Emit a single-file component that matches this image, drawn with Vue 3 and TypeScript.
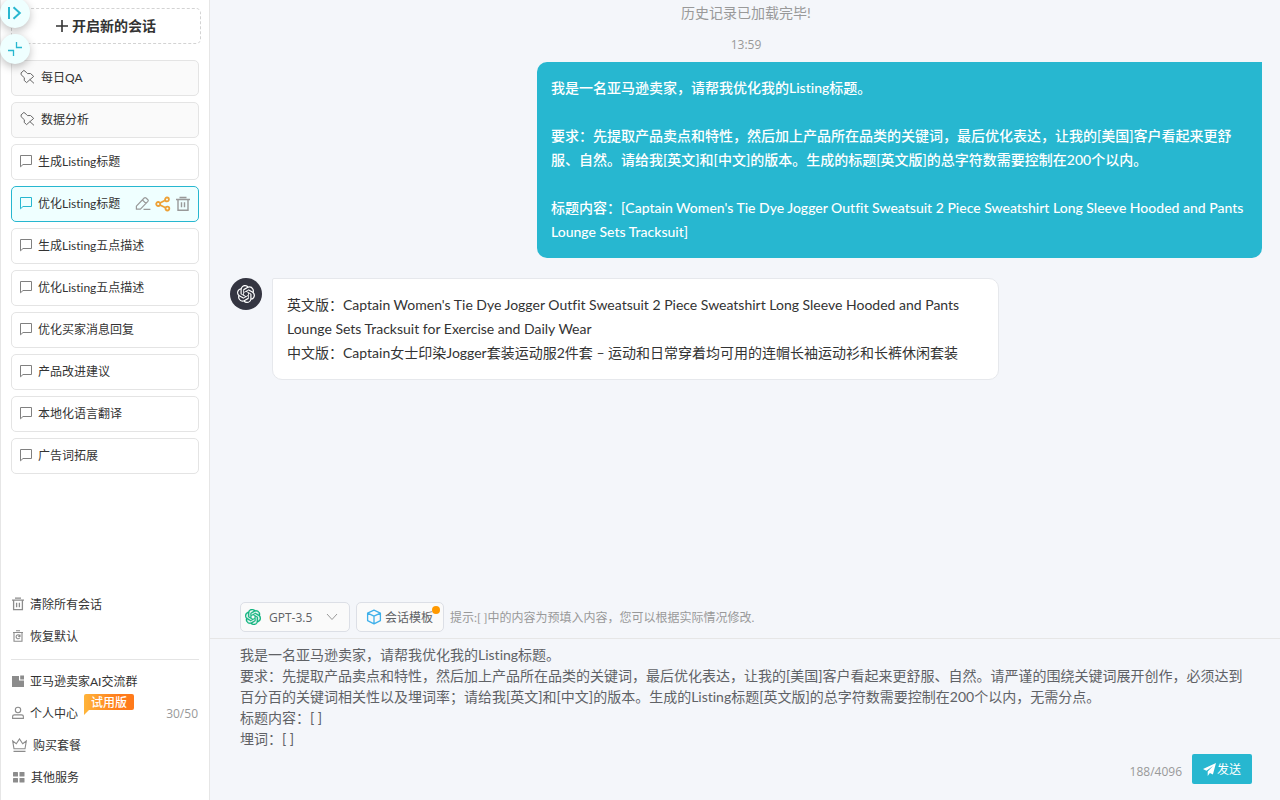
<script setup lang="ts">
import { computed, ref } from 'vue'

interface Session {
  id: number
  title: string
  pinned?: boolean
}

const sessions: Session[] = [
  { id: 1, title: '每日QA', pinned: true },
  { id: 2, title: '数据分析', pinned: true },
  { id: 3, title: '生成Listing标题' },
  { id: 4, title: '优化Listing标题' },
  { id: 5, title: '生成Listing五点描述' },
  { id: 6, title: '优化Listing五点描述' },
  { id: 7, title: '优化买家消息回复' },
  { id: 8, title: '产品改进建议' },
  { id: 9, title: '本地化语言翻译' },
  { id: 10, title: '广告词拓展' },
]
const activeId = ref(4)
const model = ref('GPT-3.5')

const question = `我是一名亚马逊卖家，请帮我优化我的Listing标题。

要求：先提取产品卖点和特性，然后加上产品所在品类的关键词，最后优化表达，让我的[美国]客户看起来更舒服、自然。请给我[英文]和[中文]的版本。生成的标题[英文版]的总字符数需要控制在200个以内。

标题内容：[Captain Women's Tie Dye Jogger Outfit Sweatsuit 2 Piece Sweatshirt Long Sleeve Hooded and Pants Lounge Sets Tracksuit]`

const answer = `英文版：Captain Women's Tie Dye Jogger Outfit Sweatsuit 2 Piece Sweatshirt Long Sleeve Hooded and Pants Lounge Sets Tracksuit for Exercise and Daily Wear
中文版：Captain女士印染Jogger套装运动服2件套 – 运动和日常穿着均可用的连帽长袖运动衫和长裤休闲套装`

const initialDraft = `我是一名亚马逊卖家，请帮我优化我的Listing标题。
要求：先提取产品卖点和特性，然后加上产品所在品类的关键词，最后优化表达，让我的[美国]客户看起来更舒服、自然。请严谨的围绕关键词展开创作，必须达到百分百的关键词相关性以及埋词率；请给我[英文]和[中文]的版本。生成的Listing标题[英文版]的总字符数需要控制在200个以内，无需分点。
标题内容：[ ]
埋词：[ ]`
const draft = ref(initialDraft)
const baseCount = 188
const count = computed(() => baseCount + draft.value.length - initialDraft.length)

const knot =
  'M22.2819 9.8211a5.9847 5.9847 0 0 0-.5157-4.9108 6.0462 6.0462 0 0 0-6.5098-2.9A6.0651 6.0651 0 0 0 4.9807 4.1818a5.9847 5.9847 0 0 0-3.9977 2.9 6.0462 6.0462 0 0 0 .7427 7.0966 5.98 5.98 0 0 0 .511 4.9107 6.051 6.051 0 0 0 6.5146 2.9001A5.9847 5.9847 0 0 0 13.2599 24a6.0557 6.0557 0 0 0 5.7718-4.2058 5.9894 5.9894 0 0 0 3.9977-2.9001 6.0557 6.0557 0 0 0-.7475-7.0729zm-9.022 12.6081a4.4755 4.4755 0 0 1-2.8764-1.0408l.1419-.0804 4.7783-2.7582a.7948.7948 0 0 0 .3927-.6813v-6.7369l2.02 1.1686a.071.071 0 0 1 .038.052v5.5826a4.504 4.504 0 0 1-4.4945 4.4944zm-9.6607-4.1254a4.4708 4.4708 0 0 1-.5346-3.0137l.142.0852 4.783 2.7582a.7712.7712 0 0 0 .7806 0l5.8428-3.3685v2.3324a.0804.0804 0 0 1-.0332.0615L9.74 19.9502a4.4992 4.4992 0 0 1-6.1408-1.6464zM2.3408 7.8956a4.485 4.485 0 0 1 2.3655-1.9728V11.6a.7664.7664 0 0 0 .3879.6765l5.8144 3.3543-2.0201 1.1685a.0757.0757 0 0 1-.071 0l-4.8303-2.7865A4.504 4.504 0 0 1 2.3408 7.872zm16.5963 3.8558L13.1038 8.364 15.1192 7.2a.0757.0757 0 0 1 .071 0l4.8303 2.7913a4.4944 4.4944 0 0 1-.6765 8.1042v-5.6772a.79.79 0 0 0-.407-.667zm2.0107-3.0231l-.142-.0852-4.7735-2.7818a.7759.7759 0 0 0-.7854 0L9.409 9.2297V6.8974a.0662.0662 0 0 1 .0284-.0615l4.8303-2.7866a4.4992 4.4992 0 0 1 6.6802 4.66zM8.3065 12.863l-2.02-1.1638a.0804.0804 0 0 1-.038-.0567V6.0742a4.4992 4.4992 0 0 1 7.3757-3.4537l-.142.0805L8.704 5.459a.7948.7948 0 0 0-.3927.6813zm1.0976-2.3654l2.602-1.4998 2.6069 1.4998v2.9994l-2.5974 1.4997-2.6067-1.4997Z'
</script>

<template>
  <div class="app">
    <div class="floats">
      <button class="float" type="button" aria-label="展开">
        <svg width="16" height="16" viewBox="0 0 16 16" fill="none" stroke="currentColor" stroke-width="2">
          <path d="M2 2v12" />
          <path d="M6.5 2.2L12.8 8l-6.3 5.8" />
        </svg>
      </button>
      <button class="float" type="button" aria-label="收起">
        <svg width="16" height="16" viewBox="0 0 16 16" fill="none" stroke="currentColor" stroke-width="1.3">
          <path d="M9.5 1v5.5H15M1 9.5h5.5V15" />
        </svg>
      </button>
    </div>

    <aside class="sidebar">
      <button class="new-chat" type="button">
        <svg width="12" height="12" viewBox="0 0 12 12" fill="none" stroke="currentColor" stroke-width="1.6">
          <path d="M6 0v12M0 6h12" />
        </svg>
        <span>开启新的会话</span>
      </button>

      <ul class="sessions">
        <li
          v-for="s in sessions"
          :key="s.id"
          class="session"
          :class="{ pinned: s.pinned, active: s.id === activeId }"
        >
          <button class="session-main" type="button" @click="activeId = s.id">
            <svg v-if="s.pinned" width="16" height="16" viewBox="0 0 16 16" fill="none" stroke="currentColor" stroke-linejoin="round" stroke-linecap="round">
              <path d="M1.4 3.6L3.9 1.4 6.3 3.3l1.2 1.3 3-.1 3.2 2.9-3.8 3.3-3.3 2.9-2.4-2.2.2-2.6L1.4 6zM10 10.7l3.7 3.4" />
            </svg>
            <svg v-else class="bubble-icon" width="14" height="14" viewBox="0 0 14 14" fill="none" stroke="currentColor">
              <path d="M1.5 12.8V1.5h11v9H4z" />
            </svg>
            <span>{{ s.title }}</span>
          </button>
          <div v-if="s.id === activeId" class="actions">
            <button type="button" aria-label="编辑">
              <svg width="16" height="16" viewBox="0 0 16 16" fill="none" stroke="#999" stroke-width="1.2" stroke-linejoin="round">
                <path d="M1.4 10.2L9.2 2q.9-.8 1.8 0l1.9 1.7q.8.8 0 1.7L5.4 13.2H1.4zM7.4 4l3.6 3.4M8.5 13.4H15.4" />
              </svg>
            </button>
            <button type="button" aria-label="分享">
              <svg width="16" height="16" viewBox="0 0 16 16" fill="none" stroke="#eda136" stroke-width="1.8">
                <circle cx="3.2" cy="8" r="2" />
                <circle cx="12" cy="3.4" r="1.9" />
                <circle cx="12.4" cy="12.6" r="1.9" />
                <path d="M5 7l5.3-2.8M5 9l5.6 2.8" />
              </svg>
            </button>
            <button type="button" aria-label="删除">
              <svg width="16" height="16" viewBox="0 0 16 16" fill="none" stroke="#999" stroke-width="1.4">
                <path d="M1 3.5h14M4.5 1.5h7M3 3.5v10.8h10V3.5M6.5 6.2v5M9.5 6.2v5" />
              </svg>
            </button>
          </div>
        </li>
      </ul>

      <nav class="tools">
        <button type="button" class="tool">
          <svg width="12" height="14" viewBox="0 0 12 14" fill="none" stroke="currentColor" stroke-width="1.3">
            <path d="M0 3.2h12M3 1.2h6M1.6 3.2v9.4h8.8V3.2M4.6 5.8v4.4M7.4 5.8v4.4" />
          </svg>
          <span>清除所有会话</span>
        </button>
        <button type="button" class="tool">
          <svg width="12" height="14" viewBox="0 0 12 14" fill="none" stroke="currentColor" stroke-width="1.1">
            <path d="M1 3.5h10M4 1.7h4M2 3.5v8.8h8V3.5M7.6 6.4a2 2 0 1 0 .2 2.4M8 5.6v1.8H6.2" />
          </svg>
          <span>恢复默认</span>
        </button>
        <hr />
        <a href="#group" class="tool">
          <svg width="12" height="14" viewBox="0 0 12 14" fill="currentColor">
            <path d="M0 2h7v4.5h5V13H0zM8.2 1.6H12V5.4H8.2z" />
          </svg>
          <span>亚马逊卖家AI交流群</span>
        </a>
        <a href="#me" class="tool">
          <svg width="12" height="14" viewBox="0 0 12 14" fill="none" stroke="currentColor" stroke-width="1.1">
            <circle cx="6" cy="4" r="2.7" />
            <path d="M.6 12.4v-1.6q0-1.9 2-1.9h6.8q2 0 2 1.9v1.6z" />
          </svg>
          <span class="me">个人中心<em class="trial">试用版</em></span>
          <span class="quota">30/50</span>
        </a>
        <a href="#plans" class="tool">
          <svg width="15" height="14" viewBox="0 0 15 14" fill="none" stroke="currentColor" stroke-width="1.1">
            <path d="M2 10.8L.7 3l3.6 2.7L7.5.9l3.2 4.8L14.3 3 13 10.8zM1.5 13.4h12" />
          </svg>
          <span>购买套餐</span>
        </a>
        <a href="#services" class="tool">
          <svg width="13" height="12" viewBox="0 0 13 12" fill="currentColor">
            <rect x="1" y="1" width="5" height="4.5" rx=".6" />
            <rect x="7.5" y="1" width="5" height="4.5" rx=".6" />
            <rect x="1" y="7" width="5" height="4.5" rx=".6" />
            <rect x="7.5" y="7" width="5" height="4.5" rx=".6" />
          </svg>
          <span>其他服务</span>
        </a>
      </nav>
    </aside>

    <main class="main">
      <section class="chat">
        <p class="notice">历史记录已加载完毕!</p>
        <time class="time">13:59</time>
        <div class="message mine">
          <div class="bubble">{{ question }}</div>
        </div>
        <div class="message">
          <div class="avatar">
            <svg width="18" height="18" viewBox="0 0 24 24" fill="currentColor"><path :d="knot" /></svg>
          </div>
          <div class="bubble">{{ answer }}</div>
        </div>
      </section>

      <div class="toolbar">
        <label class="model">
          <svg class="model-logo" width="16" height="16" viewBox="0 0 24 24" fill="currentColor" stroke="currentColor" stroke-width=".6"><path :d="knot" /></svg>
          <select v-model="model" aria-label="模型">
            <option>GPT-3.5</option>
          </select>
          <svg class="arrow" width="12" height="12" viewBox="0 0 12 12" fill="none" stroke="currentColor">
            <path d="M1 3l5 5.5L11 3" />
          </svg>
        </label>
        <button type="button" class="template">
          <svg width="16" height="16" viewBox="0 0 16 16" fill="none" stroke="#3fb0ea" stroke-width="1.3" stroke-linejoin="round">
            <path d="M8 1.2l6.4 2.9v7.6L8 14.8l-6.4-3.1V4.1zM1.6 4.1L8 7.2l6.4-3.1M8 7.2v7.6" />
          </svg>
          <span>会话模板</span>
          <i class="dot"></i>
        </button>
        <span class="hint">提示:[ ]中的内容为预填入内容，您可以根据实际情况修改.</span>
      </div>

      <form class="composer" @submit.prevent>
        <textarea v-model="draft" aria-label="消息内容" spellcheck="false"></textarea>
        <div class="send-row">
          <span class="count">{{ count }}/4096</span>
          <button type="submit" class="send">
            <svg width="13" height="13" viewBox="0 0 13 13" fill="currentColor">
              <path d="M13 0L0 6l3.4 1.7L10 3 4.7 8.4V13l2.2-3 3 1.6z" />
            </svg>
            <span>发送</span>
          </button>
        </div>
      </form>
    </main>
  </div>
</template>

<style>
html,
body {
  margin: 0;
  height: 100%;
}
#app {
  height: 100%;
}
</style>

<style scoped>
* {
  box-sizing: border-box;
}
.app {
  position: relative;
  display: flex;
  height: 100vh;
  overflow: hidden;
  background: #f4f6fa;
  color: #333;
  font-family: Lato, 'Noto Sans CJK SC', sans-serif;
  font-size: 12px;
  line-height: 19px;
  font-variant-ligatures: none;
}
button,
select,
textarea {
  margin: 0;
  padding: 0;
  border: 0;
  background: none;
  color: inherit;
  font: inherit;
}
button {
  cursor: pointer;
}
svg {
  display: block;
  flex: none;
}
.time,
.quota,
.count,
.model select {
  font-family: 'Open Sans', 'Noto Sans CJK SC', sans-serif;
}
.floats {
  position: absolute;
  left: 0;
  top: -2px;
  z-index: 2;
  display: grid;
  gap: 6px;
}
.float {
  display: grid;
  place-items: center;
  width: 30px;
  height: 30px;
  border-radius: 50%;
  background: #efffff;
  color: #27b7d0;
  box-shadow: 0 3px 8px rgba(0, 0, 0, 0.25);
}
.sidebar {
  display: flex;
  flex-direction: column;
  flex: none;
  width: 210px;
  padding: 8px 10px 7px;
  border: solid #e6e6e6;
  border-width: 0 1px;
  background: #fff;
}
.new-chat {
  display: flex;
  align-items: center;
  justify-content: center;
  gap: 4px;
  height: 36px;
  margin-right: -2px;
  border: 1px dashed #d3d3d3;
  border-radius: 5px;
  font-size: 14px;
  font-weight: 700;
  line-height: 18px;
}
.sessions {
  display: grid;
  gap: 6px;
  margin: 16px 0 0;
  padding: 0;
  list-style: none;
}
.session {
  display: flex;
  align-items: center;
  height: 36px;
  padding: 0 7px;
  border: 1px solid #e4e4e4;
  border-radius: 5px;
}
.session.pinned {
  padding: 0 8px;
  background: #fafafa;
}
.session.active {
  border-color: #27b7d0;
  background: #efffff;
}
.session-main {
  display: flex;
  align-items: center;
  flex: 1;
  gap: 5px;
  height: 100%;
  padding-bottom: 2px;
  text-align: left;
  white-space: nowrap;
}
.session-main svg {
  color: #666;
}
.session-main .bubble-icon {
  color: #808080;
}
.active .session-main .bubble-icon {
  color: #27b7d0;
}
.actions {
  display: flex;
  gap: 4px;
}
.tools {
  display: grid;
  margin-top: auto;
}
.tool {
  display: flex;
  align-items: center;
  gap: 6px;
  height: 32px;
  padding: 0 1px;
  color: inherit;
  text-decoration: none;
}
.tool svg {
  color: #8c8c8c;
}
.tools hr {
  width: 100%;
  height: 1px;
  margin: 7px 0 5px;
  border: 0;
  background: #e4e4e4;
}
.me {
  position: relative;
}
.trial {
  position: absolute;
  left: 54px;
  top: -10px;
  width: 50px;
  height: 16px;
  border-radius: 2px 2px 2px 0;
  background: linear-gradient(90deg, #ffb43a, #ff7a1a 70%);
  color: #fff;
  font-style: normal;
  font-weight: 500;
  line-height: 17px;
  text-align: center;
}
.trial::after {
  content: '';
  position: absolute;
  left: 0;
  top: 100%;
  border: solid transparent;
  border-width: 0 5px 5px 0;
  border-left: 0;
  border-top: 5px solid #ffb43a;
}
.quota {
  margin-left: auto;
  color: #999;
}
.main {
  display: flex;
  flex: 1;
  flex-direction: column;
  min-width: 0;
}
.chat {
  display: flex;
  flex: 1;
  flex-direction: column;
  min-height: 0;
  padding: 0 18px 0 20px;
  overflow: hidden;
}
.notice {
  margin: 0;
  color: #999;
  font-size: 14px;
  line-height: 26px;
  text-align: center;
}
.time {
  margin: 9px 0 7px;
  color: #999;
  line-height: 20px;
  text-align: center;
}
.message {
  display: flex;
  gap: 10px;
  margin-bottom: 20px;
}
.mine {
  justify-content: flex-end;
}
.bubble {
  box-sizing: content-box;
  max-width: 697px;
  padding: 14px;
  border: 1px solid #e6e8ec;
  border-radius: 2px 10px 10px 10px;
  background: #fff;
  font-size: 14px;
  line-height: 24px;
  white-space: pre-wrap;
}
.mine .bubble {
  border: 0;
  border-radius: 10px 0 10px 10px;
  background: #27b7d0;
  color: #fff;
  font-weight: 500;
}
.avatar {
  display: grid;
  flex: none;
  place-items: center;
  width: 32px;
  height: 32px;
  border-radius: 50%;
  background: #343541;
  color: #fff;
}
.toolbar {
  display: flex;
  align-items: center;
  gap: 6px;
  padding: 6px 30px;
}
.model,
.template {
  position: relative;
  display: flex;
  align-items: center;
  height: 30px;
  border: 1px solid #dcdfe6;
  border-radius: 5px;
  background: #fafafa;
  color: #606266;
}
.model {
  width: 110px;
}
.model-logo {
  position: absolute;
  left: 4px;
  color: #10b37f;
}
.model select {
  width: 100%;
  height: 100%;
  padding: 0 28px;
  appearance: none;
  outline: 0;
}
.arrow {
  position: absolute;
  right: 11px;
  color: #999;
  pointer-events: none;
}
.template {
  gap: 3px;
  padding: 0 10px 0 9px;
}
.dot {
  position: absolute;
  right: 3px;
  top: 3px;
  width: 8px;
  height: 8px;
  border-radius: 50%;
  background: #ff9900;
}
.hint {
  color: #999;
}
.composer {
  display: flex;
  flex-direction: column;
  border-top: 1px solid #e6e6e6;
}
.composer textarea {
  display: block;
  width: 100%;
  height: 115px;
  padding: 5px 28px 0 30px;
  color: #606266;
  font-size: 14px;
  line-height: 21px;
  outline: 0;
  overflow: hidden;
  resize: none;
}
.send-row {
  display: flex;
  align-items: center;
  justify-content: flex-end;
  gap: 10px;
  padding: 0 28px 16px;
  color: #999;
}
.count {
  padding-top: 4px;
}
.send {
  display: flex;
  align-items: center;
  justify-content: center;
  gap: 1px;
  width: 60px;
  height: 30px;
  border-radius: 2px;
  background: #27b7d0;
  color: #fff;
}
</style>
